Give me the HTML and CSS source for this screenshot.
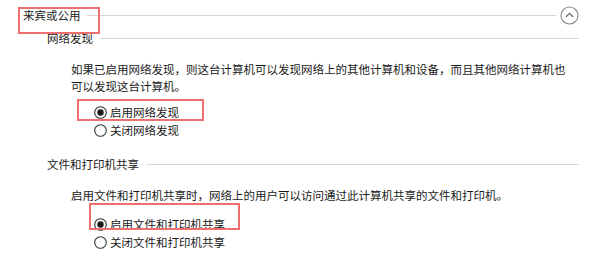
FILE: index.html
```html
<!DOCTYPE html>
<html lang="zh-CN">
<head>
<meta charset="utf-8">
<link rel="stylesheet" href="styles.css">
</head>
<body>
<div class="page">
  <div class="header">
    <span class="title">来宾或公用</span>
    <span class="rule"></span>
    <svg class="collapse" width="19" height="19" viewBox="0 0 19 19"><circle cx="9.5" cy="9.5" r="8.5" fill="none" stroke="#8c8c8c" stroke-width="1.2"/><path d="M5.8 11 L9.5 7.3 L13.2 11" fill="none" stroke="#6e6e6e" stroke-width="1.3"/></svg>
  </div>

  <div class="subhead sub1">
    <span class="subtitle">网络发现</span>
    <span class="rule"></span>
  </div>
  <p class="desc desc1">如果已启用网络发现，则这台计算机可以发现网络上的其他计算机和设备，而且其他网络计算机也<br>可以发现这台计算机。</p>
  <div class="radios radios1">
    <label class="radio"><svg width="13" height="13" viewBox="0 0 13 13"><circle cx="6.5" cy="6.5" r="5.8" fill="#fff" stroke="#333" stroke-width="1.1"/><circle cx="6.5" cy="6.5" r="3.2" fill="#1a1a1a"/></svg><span>启用网络发现</span></label>
    <label class="radio"><svg width="13" height="13" viewBox="0 0 13 13"><circle cx="6.5" cy="6.5" r="5.8" fill="#fff" stroke="#333" stroke-width="1.1"/></svg><span>关闭网络发现</span></label>
  </div>

  <div class="subhead sub2">
    <span class="subtitle">文件和打印机共享</span>
    <span class="rule"></span>
  </div>
  <p class="desc desc2">启用文件和打印机共享时，网络上的用户可以访问通过此计算机共享的文件和打印机。</p>
  <div class="radios radios2">
    <label class="radio"><svg width="13" height="13" viewBox="0 0 13 13"><circle cx="6.5" cy="6.5" r="5.8" fill="#fff" stroke="#333" stroke-width="1.1"/><circle cx="6.5" cy="6.5" r="3.2" fill="#1a1a1a"/></svg><span>启用文件和打印机共享</span></label>
    <label class="radio"><svg width="13" height="13" viewBox="0 0 13 13"><circle cx="6.5" cy="6.5" r="5.8" fill="#fff" stroke="#333" stroke-width="1.1"/></svg><span>关闭文件和打印机共享</span></label>
  </div>

  <div class="mark mark1"></div>
  <div class="mark mark2"></div>
  <div class="mark mark3"></div>
</div>
</body>
</html>
```

FILE: styles.css
```css
html, body {
  margin: 0;
  padding: 0;
  background: #ffffff;
}
.page {
  position: relative;
  width: 600px;
  height: 256px;
  overflow: hidden;
  font-family: "Noto Sans CJK SC", "Noto Sans", sans-serif;
  font-size: 11.5px;
  color: #1a1a1a;
}
.header {
  display: flex;
  align-items: center;
  height: 30px;
  padding-left: 23px;
  padding-right: 21px;
}
.title {
  line-height: 16px;
}
.rule {
  flex: 1;
  height: 0;
  border-top: 1px solid #d6d6d6;
  margin-left: 6px;
}
.collapse {
  margin-left: 4px;
  flex: none;
}
.subhead {
  display: flex;
  align-items: center;
  height: 16px;
  padding-left: 47px;
  padding-right: 21px;
}
.subhead .subtitle {
  line-height: 16px;
}
.subhead .rule {
  margin-left: 8px;
}
.sub2 {
  margin-top: 17px;
}
.desc {
  margin: 0;
  padding-left: 71px;
  line-height: 17px;
  white-space: nowrap;
}
.desc1 {
  margin-top: 15px;
}
.desc2 {
  margin-top: 15px;
}
.radios {
  display: flex;
  flex-direction: column;
  padding-left: 94px;
}
.radios1 {
  margin-top: 8px;
}
.radios2 {
  margin-top: 11px;
}
.radio {
  display: flex;
  align-items: center;
  height: 18px;
  gap: 3px;
}
.radio svg {
  flex: none;
}
.radio span {
  line-height: 16px;
}
.mark {
  position: absolute;
  border: 2px solid #ef6f6f;
  box-sizing: border-box;
}
.mark1 {
  left: 18px;
  top: 7px;
  width: 82px;
  height: 27px;
}
.mark2 {
  left: 77px;
  top: 99px;
  width: 127px;
  height: 22px;
}
.mark3 {
  left: 89px;
  top: 203px;
  width: 151px;
  height: 27px;
}
```
